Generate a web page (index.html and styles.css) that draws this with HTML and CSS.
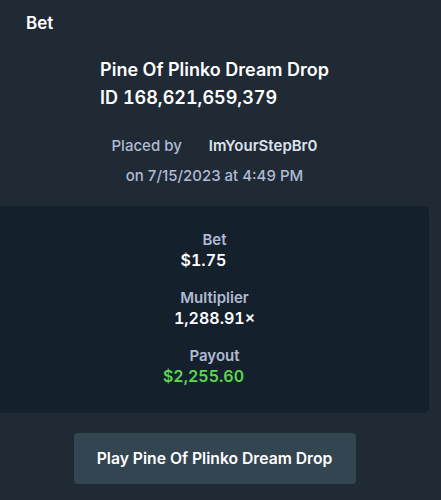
FILE: index.html
```html
<!DOCTYPE html>
<html lang="en">
<head>
    <meta charset="UTF-8">
    <meta name="viewport" content="width=device-width, initial-scale=1.0">
    <title>Bet</title>
    <link rel="stylesheet" href="styles.css">
</head>
<body>
    <div class="modal">
        <h2 class="modal-title">Bet</h2>

        <div class="game">
            <div class="game-name">Pine Of Plinko Dream Drop</div>
            <div class="game-id">ID 168,621,659,379</div>
        </div>

        <div class="placed">
            <div class="placed-row">
                <span>Placed by</span>
                <span class="user">ImYourStepBr0</span>
            </div>
            <div>on 7/15/2023 at 4:49 PM</div>
        </div>

        <div class="stats">
            <div class="stat">
                <div class="label">Bet</div>
                <div class="value money">$1.75</div>
            </div>
            <div class="stat">
                <div class="label">Multiplier</div>
                <div class="value">1,288.91×</div>
            </div>
            <div class="stat">
                <div class="label">Payout</div>
                <div class="value money win">$2,255.60</div>
            </div>
        </div>

        <div class="actions">
            <button class="play">Play Pine Of Plinko Dream Drop</button>
        </div>
    </div>
</body>
</html>
```

FILE: styles.css
```css
body {
    margin: 0;
    background-color: #1f2a35;
    font-family: Inter, "Noto Sans", sans-serif;
    color: #ffffff;
}
.modal {
    width: 429px;
    padding-top: 11px;
}
.modal-title {
    margin: 0 0 21px 26px;
    font-size: 17px;
    line-height: 24px;
    font-weight: 600;
}
.game {
    display: flex;
    flex-direction: column;
    align-items: flex-start;
    width: max-content;
    margin: 0 auto;
    font-size: 18px;
    line-height: 28px;
    font-weight: 600;
}
.game-id {
    font-variant-numeric: tabular-nums;
}
.placed {
    margin-top: 19px;
    text-align: center;
    font-size: 15px;
    line-height: 30px;
    font-weight: 500;
    color: #b1bad3;
}
.placed-row {
    display: flex;
    justify-content: center;
    gap: 27px;
}
.user {
    font-weight: 600;
    color: #dde2ec;
}
.stats {
    margin-top: 15px;
    padding: 24px 0 27px;
    background-color: #14202c;
    border-radius: 0 5px 5px 0;
    display: flex;
    flex-direction: column;
    gap: 18px;
    text-align: center;
    font-size: 15px;
    line-height: 20px;
}
.label {
    color: #b1bad3;
    font-weight: 600;
}
.value {
    font-size: 16px;
    font-weight: 600;
    font-variant-numeric: tabular-nums;
}
.money {
    padding-right: 22px;
}
.win {
    color: #5bd94b;
}
.actions {
    display: flex;
    justify-content: center;
    margin-top: 20px;
}
.play {
    width: 282px;
    height: 51px;
    border: none;
    border-radius: 4px;
    background-color: #344552;
    color: #ffffff;
    font-family: Inter, "Noto Sans", sans-serif;
    font-size: 15.7px;
    font-weight: 600;
    cursor: pointer;
}
```
